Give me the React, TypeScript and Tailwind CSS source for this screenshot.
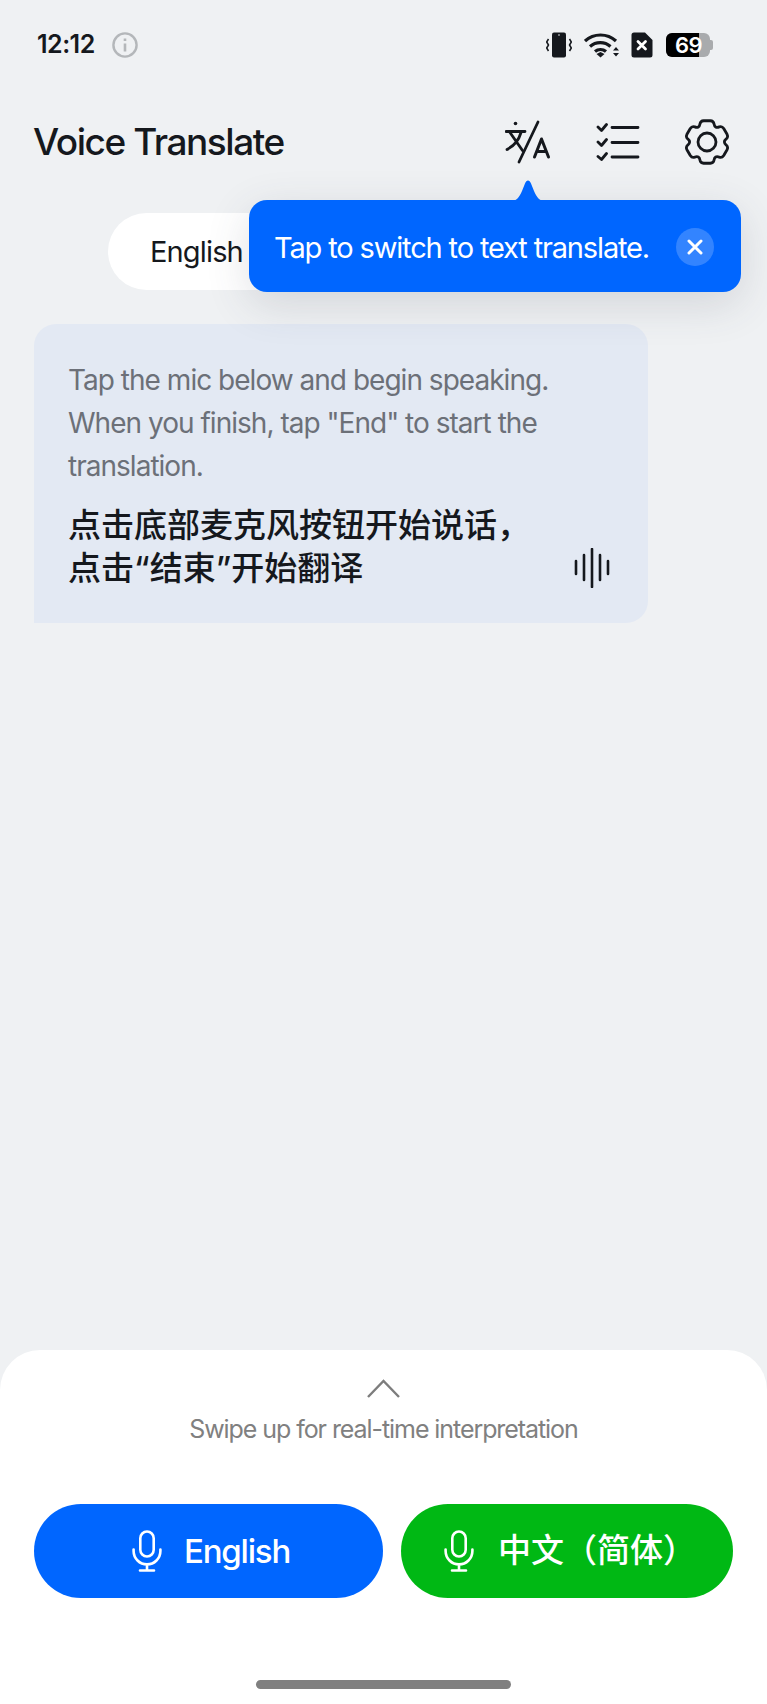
import React from "react";

const FONT = "font-['Inter','Noto_Sans_CJK_SC',sans-serif]";

function gearPath(cx: number, cy: number) {
  const pt = (r: number, deg: number) => {
    const a = (deg * Math.PI) / 180;
    return `${(cx + r * Math.cos(a)).toFixed(2)} ${(cy - r * Math.sin(a)).toFixed(2)}`;
  };
  let d = "";
  for (let i = 0; i < 6; i++) {
    const a = 90 + 60 * i;
    d += `${i === 0 ? "M" : " L"}${pt(21.5, a - 9)} L${pt(21.5, a + 9)}`;
    d += ` Q${pt(22, a + 17)} ${pt(19.5, a + 21)}`;
    d += ` Q${pt(15.5, a + 30)} ${pt(19.5, a + 39)}`;
    d += ` Q${pt(22, a + 43)} ${pt(21.5, a + 51)}`;
  }
  return d + "Z";
}

function Mic() {
  return (
    <svg width="30" height="42" viewBox="0 0 30 42" fill="none" stroke="#fff" strokeWidth="2.6" strokeLinecap="round" className="shrink-0">
      <rect x="8.3" y="1.5" width="13.4" height="25" rx="6.7" />
      <path d="M1.6 19.5v1.5a13.4 13.4 0 0 0 26.8 0v-1.5M15 34.5v6M8 40.5h14" />
    </svg>
  );
}

export default function App() {
  return (
    <div className={`${FONT} relative flex h-[1704px] w-[767px] flex-col overflow-hidden bg-[#eff1f3] text-[#15181d]`}>
      {/* status bar */}
      <div className="flex h-[89px] items-center justify-between pl-[37px] pr-[54px]">
        <div className="flex items-center gap-[17px]">
          <span className="text-[25px] font-semibold tracking-[-0.5px]">12:12</span>
          <svg width="26" height="26" viewBox="0 0 26 26" fill="none" stroke="#b4b7ba" strokeWidth="2.4">
            <circle cx="13" cy="13" r="11.6" />
            <path d="M13 11.5v8M13 6.5v2.6" strokeWidth="2.6" />
          </svg>
        </div>
        <div className="flex items-center gap-[12px]">
          <svg width="26" height="26" viewBox="0 0 26 26" fill="none">
            <rect x="6" y="0.5" width="14" height="25" rx="2" fill="#15181d" />
            <circle cx="13" cy="3" r="0.8" fill="#eff1f3" />
            <path d="M2.500 7l-1.800 3 1.800 3-1.800 3 1.800 3M23.500 7l1.800 3-1.800 3 1.800 3-1.800 3" stroke="#15181d" strokeWidth="1.5" strokeLinejoin="round" />
          </svg>
          <svg width="35" height="26" viewBox="0 0 35 26" fill="none" stroke="#15181d" strokeWidth="3.2">
            <path d="M1 9a23 23 0 0 1 31 0M6 14.500a15.500 15.500 0 0 1 20.500 0M11 19.500a8.500 8.500 0 0 1 11 0" />
            <path d="M12.500 22l4-2 4 2-4 3.500z" fill="#15181d" stroke="none" />
            <path d="M29 18.500l3-3.500 3 3.500zM29 21h6l-3 3.500z" fill="#15181d" stroke="none" />
          </svg>
          <svg width="22" height="26" viewBox="0 0 22 26">
            <path d="M3 0.5h11l7.500 7.500v15a2.500 2.500 0 0 1-2.500 2.500H3A2.500 2.500 0 0 1 0.500 23V3A2.500 2.500 0 0 1 3 0.500z" fill="#15181d" />
            <path d="M7 9.500l7.500 7.500M14.500 9.500L7 17" stroke="#fff" strokeWidth="2.800" strokeLinecap="round" />
          </svg>
          <div className="relative ml-[1px] flex h-[24px] w-[47px] items-center">
            <div className="flex h-full w-[44px] overflow-hidden rounded-[6px] bg-[#a9abad]">
              <div className="h-full w-[33px] bg-black"></div>
            </div>
            <div className="h-[10px] w-[3px] rounded-r-[2px] bg-[#a9abad]"></div>
            <span className="absolute left-[9px] top-0 text-[22px] font-semibold leading-[24px] tracking-[-0.5px] text-white">69</span>
          </div>
        </div>
      </div>

      {/* header */}
      <div className="mt-[28px] flex h-[50px] items-center justify-between pl-[33px] pr-[37px]">
        <h1 className="text-[37px] font-medium tracking-[-1.45px]">Voice Translate</h1>
        <div className="flex items-center">
          <svg width="46" height="44" viewBox="0 0 46 44" fill="none" stroke="#15181d" strokeWidth="2.8" strokeLinecap="round" strokeLinejoin="round">
            <circle cx="10.5" cy="3.500" r="1.800" fill="#15181d" stroke="none" />
            <path d="M1 11.500h19M5 12.500l12.500 18M16 12.500c-2 7-6 13-14 17" />
            <path d="M33 2L14 42" />
            <path d="M29.500 37L36.500 19L43.500 37M32 31.500h9" strokeWidth="3" />
          </svg>
          <svg width="44" height="38" viewBox="0 0 44 38" fill="none" stroke="#15181d" strokeWidth="2.8" strokeLinecap="round" strokeLinejoin="round" className="ml-[45px]">
            <path d="M16 4.500h26M16 19.500h26M16 34h26" />
            <path d="M2 4l3.500 3.500L10.500 1.500M2 19l3.500 3.500 5-6M2 33.500l3.500 3 5-6" />
          </svg>
          <svg width="46" height="48" viewBox="0 0 46 48" fill="none" stroke="#15181d" strokeWidth="2.8" strokeLinejoin="round" className="ml-[44px]">
            <path d={gearPath(23, 24)} />
            <circle cx="23" cy="24" r="9" />
          </svg>
        </div>
      </div>

      {/* language pill */}
      <div className="ml-[108px] mt-[46px] flex h-[77px] w-[560px] items-center rounded-full bg-white pl-[42px]">
        <span className="text-[29px] tracking-[-0.85px]">English</span>
      </div>

      {/* prompt bubble */}
      <div className="ml-[34px] mt-[34px] h-[299px] w-[614px] rounded-[22px] rounded-bl-none bg-[#e3e9f3] pl-[34px] pr-[38px] pt-[35px]">
        <p className="text-[28px] leading-[43px] tracking-[-0.98px] text-[#6c7078]">
          Tap the mic below and begin speaking.
          <br />
          When you finish, tap "End" to start the
          <br />
          translation.
        </p>
        <div className="mt-[16px] flex items-end justify-between">
          <p className="text-[33px] font-medium leading-[43px] text-[#15181d]">
            点击底部麦克风按钮开始说话，
            <br />
            点击“结束”开始翻译
          </p>
          <svg width="36" height="40" viewBox="0 0 36 40" fill="none" stroke="#15181d" strokeWidth="2.6" strokeLinecap="round" className="mb-[2px]">
            <path d="M2 13v13M10 7v25M18 1v38M26 7v25M34 13v13" />
          </svg>
        </div>
      </div>

      {/* bottom sheet */}
      <div className="mt-auto flex h-[354px] flex-col items-center rounded-t-[40px] bg-white">
        <svg width="33" height="19" viewBox="0 0 33 19" fill="none" stroke="#7d7d7d" strokeWidth="2.4" className="mt-[29px]">
          <path d="M1 18L16.500 2L32 18" />
        </svg>
        <p className="mt-[13px] text-[25px] leading-[36px] tracking-[-1.07px] text-[#808080]">Swipe up for real-time interpretation</p>
        <div className="mt-[57px] flex w-full gap-[18px] pl-[34px] pr-[34px]">
          <button className="flex h-[94px] w-[349px] items-center gap-[22px] rounded-full bg-[#0066ff] pl-[98px] text-white">
            <Mic />
            <span className="mt-[2px] text-[33px] font-medium tracking-[-1.2px]">English</span>
          </button>
          <button className="flex h-[94px] w-[332px] items-center gap-[24px] rounded-full bg-[#00b814] pl-[43px] text-white">
            <Mic />
            <span className="text-[33px] font-medium">中文（简体）</span>
          </button>
        </div>
        <div className="mt-auto mb-[15px] h-[9px] w-[255px] rounded-full bg-[#808080]"></div>
      </div>

      {/* tooltip */}
      <div className="absolute left-[249px] top-[200px] flex h-[92px] w-[492px] items-center rounded-[18px] bg-[#0066ff] pl-[25px] pr-[27px] shadow-[0_12px_44px_rgba(60,70,90,0.16)]">
        <svg width="34" height="22" viewBox="0 0 34 22" className="absolute left-[262px] top-[-21px]">
          <path d="M0 22C5 22 8 19 11 12L14 4.500C15.500 0.500 18.500 0.500 20 4.500L23 12C26 19 29 22 34 22Z" fill="#0066ff" />
        </svg>
        <span className="mt-[4px] text-[29px] tracking-[-1.15px] text-white">Tap to switch to text translate.</span>
        <div className="ml-auto mt-[1px] flex h-[38px] w-[38px] items-center justify-center rounded-full bg-white/20">
          <svg width="16" height="16" viewBox="0 0 16 16" stroke="#fff" strokeWidth="3" strokeLinecap="round">
            <path d="M2 2l12 12M14 2L2 14" />
          </svg>
        </div>
      </div>
    </div>
  );
}
